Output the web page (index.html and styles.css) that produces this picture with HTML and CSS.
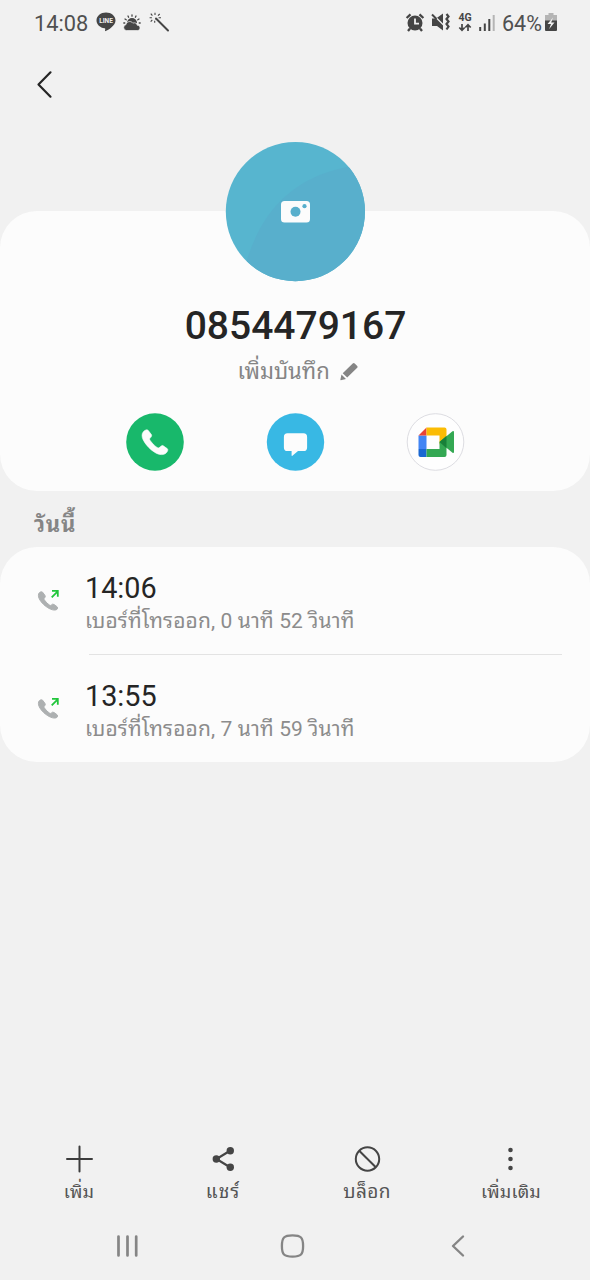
FILE: index.html
```html
<!DOCTYPE html>
<html lang="th">
<head>
<meta charset="utf-8">
<title>0854479167</title>
<link rel="stylesheet" href="styles.css">
</head>
<body>
<header class="status">
  <span class="clock">14:08</span>
  <svg class="line-icon" width="20" height="20" viewBox="0 0 20 20"><path d="M10 .5C4.700.5.5 4 .5 8.400c0 3.900 3.500 7.200 8.200 7.800.6.200.6.600.5 1.200l-.2 1.400c0 .4.200.6.700.3 2.500-1.300 9.800-5.400 9.800-10.700C19.500 4 15.300.5 10 .5z" fill="#454545"/><text x="10" y="10.600" text-anchor="middle" class="line-label">LINE</text></svg>
  <svg class="weather" width="18" height="17" viewBox="0 0 18 17"><g stroke="#454545" stroke-width="1.300" stroke-linecap="round"><path d="M9 .8v1.400M5 2l.6 1.200M13 2l-.6 1.200M2 5l1.200.8M16 5l-1.200.8M.8 9h1M16.200 9h1"/></g><path d="M4 9a5 5 0 0 1 10 0" fill="#454545"/><path d="M3.300 16.500a3 3 0 0 1-.3-5.900c.8-3.400 5-4.100 6.800-1.500 2-.9 4.300.2 4.500 2.200 3.700.1 3.600 5.200 0 5.200z" fill="#454545" stroke="#f1f1f1" stroke-width=".7"/></svg>
  <svg class="wand" width="21" height="20" viewBox="0 0 21 20"><path d="M7 6.500 19 18.500" stroke="#454545" stroke-width="2" stroke-linecap="round"/><path d="M6 .7v2.300M1.800 1.700l1.600 1.900M10.700 2 9 3.700M.6 5.700h2.300M9.600 5.700H12M3.300 7.800 1.700 9.600M5.700 8.700v2" stroke="#454545" stroke-width="1.100"/></svg>
  <span class="grow"></span>
  <svg class="alarm" width="19" height="19" viewBox="0 0 19 19"><circle cx="9" cy="10" r="7.500" fill="#454545"/><path d="M.6 5 4.500 1.400M17.400 5l-3.900-3.600M4 15.500l-2 2.500M14 15.500l2 2.500" stroke="#454545" stroke-width="2.300"/><path d="M9 5.500v5.200h4" fill="none" stroke="#f1f1f1" stroke-width="1.800"/></svg>
  <svg class="mute" width="19" height="19" viewBox="0 0 19 19"><path d="M0 5.500h4l7-5v17l-6-4.500H0z" fill="#454545"/><path d="M-1 -.5 13 13.500" stroke="#f1f1f1" stroke-width="1.300"/><path d="m0 1.500 4.500 4.500" stroke="#454545" stroke-width="2"/><path d="m14.500 1 2 2.500-2 2.500 2 2.500-2 2.500 2 2.500-2 3" fill="none" stroke="#454545" stroke-width="2.200"/></svg>
  <svg class="network" width="14" height="20" viewBox="0 0 14 20"><text x="7" y="8.500" text-anchor="middle" class="network-label">4G</text><path d="M4 12v6M1.300 15.500 4 18.300l2.700-2.800M10 19v-6M7.300 15.500 10 12.700l2.700 2.800" fill="none" stroke="#454545" stroke-width="1.700"/></svg>
  <svg class="signal" width="16" height="17" viewBox="0 0 16 17"><path d="M1.200 13v4M5.800 9.500V17M10.300 5v12" stroke="#454545" stroke-width="2"/><path d="M14.700 1v16" stroke="#b5b5b5" stroke-width="2"/></svg>
  <span class="percent">64%</span>
  <svg class="battery" width="12" height="18" viewBox="0 0 12 18"><path d="M3.500 0h5v2H12v7H0V2h3.500z" fill="#b5b5b5"/><path d="M0 7.500h12V17q0 1-1 1H1q-1 0-1-1z" fill="#454545"/><path d="M8 4.500 2.500 11H6l-1.800 5L9.500 9.500H6.200z" fill="#f1f1f1"/></svg>
</header>

<nav class="appbar">
  <svg width="18" height="30" viewBox="0 0 18 30"><path d="M14.500 2.300 2.500 14.500l12 12.200" fill="none" stroke="#252525" stroke-width="2.200" stroke-linecap="round" stroke-linejoin="round"/></svg>
</nav>

<main>
  <section class="card profile">
    <svg class="avatar" width="140" height="140" viewBox="0 0 140 140">
      <defs><clipPath id="disc"><circle cx="70.400" cy="69.600" r="69.600"/></clipPath></defs>
      <g clip-path="url(#disc)"><path d="M0 0h140v140H0z" fill="#57b5cf"/><path d="M20 125C33 76 62 37 122 25l18 5v110H20z" fill="#58afcc"/></g>
      <rect x="56" y="59" width="29" height="21.500" rx="3.500" fill="#fcfcfc"/><circle cx="70.500" cy="69.700" r="5" fill="#58afcc"/><circle cx="79.500" cy="64.200" r="2.100" fill="#58afcc"/>
    </svg>
    <h1 class="number">0854479167</h1>
    <div class="note"><span class="note-text">เพิ่มบันทึก</span>
      <svg class="pencil" width="20" height="20" viewBox="0 0 20 20"><path d="m3.700 11.300 10-9.800q1-.9 2 0L18.200 4q1 .9 0 1.800L8.200 15.600zM2.500 12.400l4.500 4.500-5.200 1.300q-.6 0-.4-.6z" fill="#858585"/></svg>
    </div>
    <div class="actions">
      <svg width="58" height="58" viewBox="0 0 58 58"><circle cx="29" cy="29" r="28.800" fill="#18b86b"/><path d="M17.500 18.600c1.600-1.500 3.400-2.500 4.600-1.300l3.300 4.300c1 1.700-1 3-1.800 4.200-.7 1.200 6.200 8.700 8.700 9.200 1.300.1 2.800-3 4.600-2.400l4.300 3c1.400 1.200.2 3.300-1.300 4.600-2.500 2-6.300 1.800-10.200-.3-5-2.700-10-8-12.600-13.200-1.500-3.100-1.400-6.200.4-8.100z" fill="#fcfcfc" stroke="#fcfcfc" stroke-width=".6"/></svg>
      <svg width="58" height="58" viewBox="0 0 58 58"><circle cx="29.500" cy="29" r="28.700" fill="#38b8e4"/><path d="M21 20.300h16q3.600 0 3.600 3.600v10.500q0 3.600-3.600 3.600h-5.500l-5.600 4.800q-.8.500-.8-.5V38H21q-3.600 0-3.600-3.600V23.900q0-3.600 3.600-3.600z" transform="translate(.5 0)" fill="#fcfcfc"/></svg>
      <svg width="58" height="58" viewBox="0 0 58 58"><circle cx="28.500" cy="29" r="28.300" fill="#fefefe" stroke="#dddde2"/><path d="M11.500 22.500h8v13.500h-8z" fill="#4285f4"/><path d="m11.500 22.500 8-8v8z" fill="#ea4335"/><path d="M19.500 14.500h18q2 0 2 2v9l-7 6v-9h-13z" fill="#fbbc04"/><path d="M11.500 36h8v8h-6q-2 0-2-2z" fill="#1967d2"/><path d="M19.500 36h13v-7l7-6v19q0 2-2 2h-18z" fill="#34a853"/><path d="m32.500 29 13-10.800q1.500-.8 1.500 1v19.600q0 1.800-1.500 1z" fill="#34a853"/><path d="m32.500 29 7-6v12.200z" fill="#188038"/></svg>
    </div>
  </section>

  <h2 class="day">วันนี้</h2>

  <section class="card log">
    <article class="call">
      <svg class="outgoing" width="22" height="22" viewBox="0 0 22 22"><path d="M1.300 2.300Q3 .5 4.600 1.700L7 5q.8 1.300-.5 2.500c-.8.700-.6 1.200 0 2.100 1.400 2 3 3.700 5 5 .8.500 1.400.5 2-.2q1-1.300 2.500-.4l3 2.200q1.400 1.200-.2 2.800C12.500 22.500-3.500 8.300 1.300 2.300z" transform="translate(0 1.500)" fill="#adb0b1" stroke="#adb0b1" stroke-width="1"/><path d="m13.700 8.300 6-6M14 1.900h5.800v5.800" fill="none" stroke="#22c63c" stroke-width="1.800"/></svg>
      <div class="details"><div class="time">14:06</div><div class="description">เบอร์ที่โทรออก, 0 นาที 52 วินาที</div></div>
    </article>
    <article class="call">
      <svg class="outgoing" width="22" height="22" viewBox="0 0 22 22"><path d="M1.300 2.300Q3 .5 4.600 1.700L7 5q.8 1.300-.5 2.500c-.8.700-.6 1.200 0 2.100 1.400 2 3 3.700 5 5 .8.500 1.400.5 2-.2q1-1.300 2.500-.4l3 2.200q1.400 1.200-.2 2.800C12.500 22.500-3.500 8.300 1.300 2.300z" transform="translate(0 1.500)" fill="#adb0b1" stroke="#adb0b1" stroke-width="1"/><path d="m13.700 8.300 6-6M14 1.900h5.800v5.800" fill="none" stroke="#22c63c" stroke-width="1.800"/></svg>
      <div class="details"><div class="time">13:55</div><div class="description">เบอร์ที่โทรออก, 7 นาที 59 วินาที</div></div>
    </article>
  </section>
</main>

<footer class="toolbar">
  <div class="tool"><svg width="28" height="28" viewBox="0 0 28 28"><path d="M14.500 1.500v25M2 14h25" stroke="#3c3c3c" stroke-width="2" stroke-linecap="round"/></svg><span class="add-label">เพิ่ม</span></div>
  <div class="tool"><svg width="28" height="28" viewBox="0 0 28 28"><path d="M21 5.700 7.500 14 21 22.300" fill="none" stroke="#454545" stroke-width="2.200"/><circle cx="21.300" cy="5.700" r="3.700" fill="#454545"/><circle cx="7.300" cy="14" r="3.700" fill="#454545"/><circle cx="21.300" cy="22.300" r="3.700" fill="#454545"/></svg><span class="share-label">แชร์</span></div>
  <div class="tool"><svg width="28" height="28" viewBox="0 0 28 28"><circle cx="14.500" cy="14" r="11.700" fill="none" stroke="#454545" stroke-width="2"/><path d="m6.200 5.700 16.600 16.600" stroke="#454545" stroke-width="2"/></svg><span class="block-label">บล็อก</span></div>
  <div class="tool"><svg width="28" height="28" viewBox="0 0 28 28"><g fill="#454545"><circle cx="13.500" cy="5" r="2.300"/><circle cx="13.500" cy="14" r="2.300"/><circle cx="13.500" cy="23" r="2.300"/></g></svg><span class="more-label">เพิ่มเติม</span></div>
</footer>

<nav class="navbar">
  <svg width="24" height="24" viewBox="0 0 24 24"><path d="M2.500 2.500v19M11.500 2.500v19M20.200 2.500v19" stroke="#858585" stroke-width="2.700" stroke-linecap="round"/></svg>
  <svg width="24" height="24" viewBox="0 0 24 24"><path d="M12 1.400c8.500 0 10.600 2.100 10.600 10.600S20.500 22.600 12 22.600 1.400 20.500 1.400 12 3.500 1.400 12 1.400z" transform="translate(-.5)" fill="none" stroke="#858585" stroke-width="2.300"/></svg>
  <svg width="24" height="24" viewBox="0 0 24 24"><path d="M17 2.500 7 12l10 9.500" fill="none" stroke="#858585" stroke-width="2.400" stroke-linecap="round" stroke-linejoin="round"/></svg>
</nav>
</body>
</html>
```
FILE: styles.css
```css
* { box-sizing: border-box; }
body {
  margin: 0;
  width: 590px;
  height: 1280px;
  display: flex;
  flex-direction: column;
  overflow: hidden;
  background: #f1f1f1;
  color: #252525;
  font-family: Roboto, "Noto Sans Thai Looped", "Droid Sans Thai", Loma, Garuda, Waree, Umpush, "Noto Sans Thai", "Noto Sans", sans-serif;
}
svg { display: block; flex: none; overflow: visible; }
h1, h2 { margin: 0; }
.status { height: 46px; display: flex; align-items: center; padding: 0 33px 0 34px; color: #505050; }
.clock { width: 54px; font-size: 21.800px; white-space: nowrap; }
.line-icon { margin-left: 8px; margin-top: -2px; }
.line-label { font: bold 6.500px Roboto, sans-serif; fill: #f1f1f1; }
.weather { margin-left: 7px; margin-top: -2px; }
.wand { margin-left: 8px; margin-top: -2px; }
.grow { flex: 1; }
.alarm, .mute { margin-right: 7px; }
.alarm, .mute { margin-top: -2px; }
.network { margin-right: 7px; margin-top: -2px; }
.network-label { font: bold 10.500px Roboto, sans-serif; fill: #454545; }
.signal { margin-right: 7px; margin-top: -1px; }
.percent { font-size: 21.500px; width: 42px; margin-right: 1px; }
.battery { margin-top: -2px; }
.appbar { height: 165px; padding: 24px 36px; }
.card { background: #fcfcfc; border-radius: 37px; }
.profile { height: 280px; display: flex; flex-direction: column; align-items: center; }
.avatar { margin-top: -69px; }
.number { margin-top: 20px; padding-left: 1px; height: 48px; line-height: 48px; font-size: 39px; font-weight: 500; }
.note { height: 42px; width: 121px; margin-left: 6px; margin-top: 1px; display: flex; align-items: center; justify-content: space-between; color: #858585; font-size: 22px; line-height: 42px; white-space: nowrap; }
.actions { margin-top: 20px; display: flex; gap: 82.500px; }
.day { height: 56px; padding: 12px 34px 0; font-size: 22px; letter-spacing: .8px; line-height: 44px; color: #858585; font-weight: 700; }
.log { height: 215px; }
.call { height: 108px; display: flex; padding-left: 38px; }
.call + .call { margin-top: -1px; }
.outgoing { margin-top: 42px; }
.details { margin-left: 25px; padding-top: 22px; width: 477px; }
.call + .call .details { padding-top: 23px; background: linear-gradient(#e3e3e3, #e3e3e3) 4px 0 / 473px 1px no-repeat; }
.call + .call .outgoing { margin-top: 43px; }
.time { height: 37px; line-height: 38px; font-size: 28.800px; }
.description { height: 30px; line-height: 30px; font-size: 21px; letter-spacing: .12px; color: #8c8c8c; white-space: nowrap; }
.toolbar { margin-top: auto; height: 67px; display: grid; grid-template-columns: repeat(4, 144px); padding-left: 7px; color: #555; font-size: 18px; line-height: 38px; }
.tool { display: flex; flex-direction: column; align-items: center; white-space: nowrap; }
.add-label { letter-spacing: .2px; }
.share-label { font-size: 19px; letter-spacing: 1px; }
.block-label { font-size: 19px; letter-spacing: .4px; }
.more-label { letter-spacing: .2px; }
.navbar { height: 68px; display: flex; padding: 22px 0 0 116px; gap: 141px; }
```
